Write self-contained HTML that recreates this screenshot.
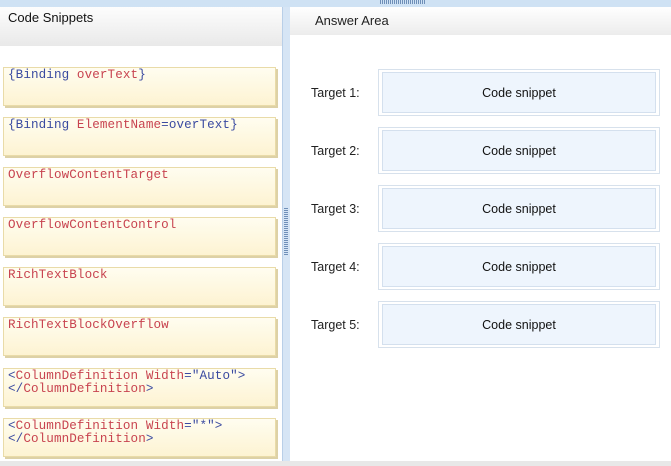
<!DOCTYPE html><html><head><style>
body{margin:0;width:671px;height:466px;background:#fff;position:relative;overflow:hidden;font-family:"Liberation Sans","DejaVu Sans",sans-serif}
.top{position:absolute;left:0;top:0;width:671px;height:7px;background:#cfe2f4}
.grip{position:absolute;left:380px;top:0;width:45px;height:4px;background:repeating-linear-gradient(90deg,#6f8fb8 0 1px,transparent 1px 2px)}
.lh{position:absolute;left:0;top:7px;width:282px;height:39px;background:linear-gradient(#fdfdfd,#e9e9e9);font-size:13px;color:#111}
.lh span{position:absolute;left:8px;top:3px}
.split{position:absolute;left:282px;top:7px;width:7px;height:459px;background:#d6e5f5;border-left:1px solid #b9cfe8}
.sg{position:absolute;left:284px;top:208px;width:4px;height:48px;background:repeating-linear-gradient(#6f8fb8 0 1px,transparent 1px 2px)}
.rh{position:absolute;left:290px;top:7px;width:381px;height:28px;background:linear-gradient(#fff,#ececec);font-size:13px;color:#222}
.rh span{position:absolute;left:25px;top:6px}
.bot{position:absolute;left:0;top:461px;width:671px;height:5px;background:#e8e8e8}
.s{position:absolute;left:3px;width:273px;background:linear-gradient(#fffdf0,#fdf3d2);border:1px solid #e9dba8;box-shadow:2px 2px 0 #ddd1a6;font-family:"Liberation Mono",monospace;font-size:12.6px;line-height:13px;padding:1px 0 0 4px;box-sizing:border-box;height:39px;color:#c8434f;letter-spacing:0.1px}
.b{color:#3a4aa0}.r{color:#c8434f}
.t{position:absolute;left:378px;width:282px;height:47px;border:1px solid #d7e1ec;background:#fff;box-sizing:border-box}
.t div{position:absolute;left:3px;top:2px;right:3px;bottom:2px;background:#eef5fd;border:1px solid #d4e0ee;font-size:12.5px;color:#111;text-align:center;line-height:40px}
.l{position:absolute;left:311px;font-size:12.5px;color:#222}
</style></head><body>
<div class="top"></div><div class="grip"></div>
<div class="lh"><span>Code Snippets</span></div>
<div class="split"></div><div class="sg"></div>
<div class="rh"><span>Answer Area</span></div>
<div class="s" style="top:67px"><span class="b">{Binding </span>overText<span class="b">}</span></div>
<div class="s" style="top:117px"><span class="b">{Binding </span>ElementName<span class="b">=overText}</span></div>
<div class="s" style="top:167px">OverflowContentTarget</div>
<div class="s" style="top:217px">OverflowContentControl</div>
<div class="s" style="top:267px">RichTextBlock</div>
<div class="s" style="top:317px">RichTextBlockOverflow</div>
<div class="s" style="top:368px"><span class="b">&lt;</span>ColumnDefinition <span class="r">Width</span><span class="b">="Auto"&gt;<br>&lt;/</span>ColumnDefinition<span class="b">&gt;</span></div>
<div class="s" style="top:418px"><span class="b">&lt;</span>ColumnDefinition <span class="r">Width</span><span class="b">="*"&gt;<br>&lt;/</span>ColumnDefinition<span class="b">&gt;</span></div>
<div class="l" style="top:86px">Target 1:</div><div class="t" style="top:69px"><div>Code snippet</div></div>
<div class="l" style="top:144px">Target 2:</div><div class="t" style="top:127px"><div>Code snippet</div></div>
<div class="l" style="top:202px">Target 3:</div><div class="t" style="top:185px"><div>Code snippet</div></div>
<div class="l" style="top:260px">Target 4:</div><div class="t" style="top:243px"><div>Code snippet</div></div>
<div class="l" style="top:318px">Target 5:</div><div class="t" style="top:301px"><div>Code snippet</div></div>
<div class="bot"></div>
</body></html>
